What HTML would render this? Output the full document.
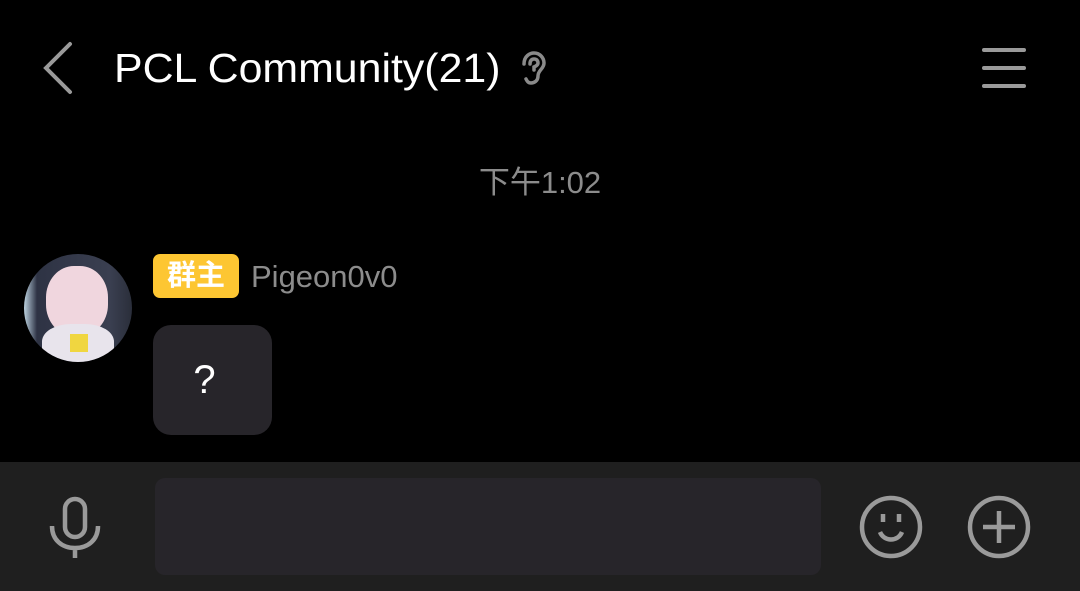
<!DOCTYPE html>
<html><head><meta charset="utf-8"><style>
body{margin:0;width:1080px;height:591px;background:#000;position:relative;overflow:hidden;font-family:"Liberation Sans","Noto Sans CJK SC",sans-serif}
.a{position:absolute}
</style></head><body>
<svg class="a" style="left:38px;top:40px" width="40" height="56"><path d="M32 4 L8 28 L32 52" stroke="#9a9a9a" stroke-width="4" fill="none" stroke-linecap="round"/></svg>
<div class="a" style="left:114px;top:45px;font-size:41px;color:#fff;transform:scaleX(1.045);transform-origin:left">PCL Community(21)</div>
<svg class="a" style="left:516px;top:50px" width="34" height="36" viewBox="0 0 34 36"><path d="M8 14 C8 6 14 3 18 3 C24 3 28 8 28 13 C28 19 22 20 22 26 C22 31 18 33 15 33 C12 33 11 31 10 29 M14 14 C14 10 16 9 18 9 C21 9 22 11 22 13 C22 15 20 16 18 17 L18 20" stroke="#8a8a8a" stroke-width="3.5" fill="none" stroke-linecap="round"/></svg>
<div class="a" style="left:982px;top:48px;width:44px;height:4px;background:#9a9a9a;border-radius:2px"></div>
<div class="a" style="left:982px;top:66px;width:44px;height:4px;background:#9a9a9a;border-radius:2px"></div>
<div class="a" style="left:982px;top:84px;width:44px;height:4px;background:#9a9a9a;border-radius:2px"></div>
<div class="a" style="left:0;width:1080px;top:157px;text-align:center;font-size:31px;color:#8c8c8c">下午1:02</div>
<div class="a" style="left:24px;top:254px;width:108px;height:108px;border-radius:50%;overflow:hidden;background:linear-gradient(90deg,#bcd2e0 0,#2e3344 12%,#3a3f50 80%,#2a2e3a 100%)">
<div class="a" style="left:22px;top:12px;width:62px;height:70px;border-radius:45%;background:#f0d6de"></div>
<div class="a" style="left:18px;top:70px;width:72px;height:44px;border-radius:40% 40% 0 0;background:#e8e4ec"></div>
<div class="a" style="left:46px;top:80px;width:18px;height:18px;background:#f0d640"></div>
</div>
<div class="a" style="left:153px;top:254px;width:86px;height:44px;background:#fdc632;border-radius:7px;color:#fff;font-size:29px;font-weight:bold;text-align:center;line-height:44px">群主</div>
<div class="a" style="left:251px;top:259px;font-size:31px;color:#8c8c8c">Pigeon0v0</div>
<div class="a" style="left:153px;top:325px;width:103px;height:110px;padding-right:16px;background:#27252a;border-radius:18px;color:#fff;font-size:40px;text-align:center;line-height:110px">?</div>
<div class="a" style="left:0;top:462px;width:1080px;height:129px;background:#1f1f1f"></div>
<div class="a" style="left:155px;top:478px;width:666px;height:97px;background:#27252a;border-radius:10px"></div>
<svg class="a" style="left:46px;top:496px" width="58" height="64" viewBox="0 0 58 64"><rect x="19" y="3" width="20" height="38" rx="10" stroke="#9a9a9a" stroke-width="4.5" fill="none"/><path d="M6 30 C6 44 16 52 29 52 C42 52 52 44 52 30 M29 52 V62" stroke="#9a9a9a" stroke-width="4.5" fill="none"/></svg>
<svg class="a" style="left:858px;top:494px" width="66" height="66" viewBox="0 0 66 66"><circle cx="33" cy="33" r="29" stroke="#9a9a9a" stroke-width="4.5" fill="none"/><path d="M25 20v8M41 20v8M22 38 C26 48 40 48 44 38" stroke="#9a9a9a" stroke-width="4.5" fill="none"/></svg>
<svg class="a" style="left:966px;top:494px" width="66" height="66" viewBox="0 0 66 66"><circle cx="33" cy="33" r="29" stroke="#9a9a9a" stroke-width="4.5" fill="none"/><path d="M33 17v32M17 33h32" stroke="#9a9a9a" stroke-width="4.5"/></svg>
</body></html>
